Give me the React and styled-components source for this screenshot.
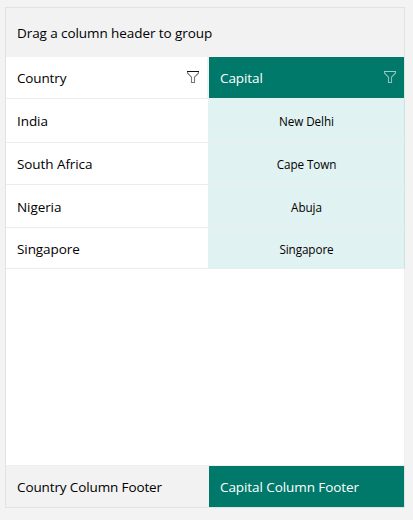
import React from 'react';
import styled, { createGlobalStyle } from 'styled-components';

const GlobalStyle = createGlobalStyle`
  * { box-sizing: border-box; }
  body {
    margin: 0;
    background: #f3f3f3;
    font-family: "Open Sans", "Noto Sans", sans-serif;
    font-size: 13.5px;
    color: #000;
  }
`;

const Page = styled.main`
  height: 520px;
  padding: 7px 8px 12px 5px;
  overflow: hidden;
`;

const Grid = styled.section`
  display: flex;
  flex-direction: column;
  width: 400px;
  height: 501px;
  border: 1px solid #e2e2e2;
  background: #f2f2f2;
`;

const GroupPanel = styled.div`
  display: flex;
  align-items: center;
  height: 49px;
  padding: 0 11px;
`;

const HeaderRow = styled.div`
  display: grid;
  grid-template-columns: 201px 195px;
  column-gap: 2px;
  height: 42px;
  border-bottom: 1px solid #ededed;
`;

const HeaderCell = styled.div`
  display: flex;
  align-items: center;
  justify-content: space-between;
  padding: 1px 7px 0 11px;
  background: ${(p) => (p.$accent ? '#00796b' : '#fff')};
  color: ${(p) => (p.$accent ? '#fff' : '#000')};
`;

const Body = styled.div`
  flex: 1;
  margin: 0 -1px 0 0;
  background: linear-gradient(to right, #fff 398px, #f0f0f0 398px);
`;

const Row = styled.div`
  display: grid;
  grid-template-columns: 202px 197px;
  height: ${(p) => p.$height}px;
`;

const Cell = styled.div`
  display: flex;
  align-items: center;
  padding: ${(p) => p.$top}px 11px 0;
  background: #fff;
  border-bottom: 1px solid #ededed;
`;

const CapitalCell = styled(Cell)`
  justify-content: center;
  padding: 1px 0 0 1px;
  background: #e0f2f1;
  border-right: 1px solid #cfe2e0;
  border-bottom-color: ${(p) => (p.$last ? '#e0f2f1' : '#ededed')};
  font-size: 11.7px;
`;

const Footer = styled.div`
  display: grid;
  grid-template-columns: 201px 195px;
  column-gap: 2px;
  height: 42px;
  border-top: 1px solid #efefef;
`;

const FooterCell = styled(HeaderCell)`
  padding-top: 0;
  background: ${(p) => (p.$accent ? '#00796b' : '#f2f2f2')};
`;

const Label = styled.span`
  white-space: pre;
  line-height: 20px;
  letter-spacing: ${(p) => p.$spacing ?? -0.08}px;
`;

const Icon = styled.svg`
  display: block;
  width: 14px;
  height: 14px;
  margin-top: -2px;
  fill: none;
  stroke: ${(p) => (p.$accent ? '#8cc4bc' : '#777')};
`;

const Rim = styled.path`
  stroke: ${(p) => (p.$accent ? '#9bcdc6' : '#111')};
`;

const FilterIcon = ({ accent }) => (
  <Icon viewBox="0 0 14 14" $accent={accent}>
    <path d="M1.6 2v1.2l3.9 4v5.3h3V7.2l3.9-4V2" strokeWidth="1.1" />
    <Rim $accent={accent} d="M1 1.5h12" />
  </Icon>
);

const rows = [
  { country: 'India', capital: 'New Delhi', height: 44, top: 0 },
  { country: 'South Africa', capital: 'Cape Town', height: 42, top: 0 },
  { country: 'Nigeria', capital: 'Abuja', height: 43, top: 2 },
  { country: 'Singapore', capital: 'Singapore', height: 41, top: 2 },
];

export default function App() {
  return (
    <Page>
      <GlobalStyle />
      <Grid>
        <GroupPanel><Label>Drag a column header to group</Label></GroupPanel>
        <HeaderRow>
          <HeaderCell><Label $spacing={-0.14}>Country</Label><FilterIcon /></HeaderCell>
          <HeaderCell $accent><Label $spacing={-0.1}>Capital</Label><FilterIcon accent /></HeaderCell>
        </HeaderRow>
        <Body>
          {rows.map((r, i) => (
            <Row key={r.country} $height={r.height}>
              <Cell $top={r.top}><Label>{r.country}</Label></Cell>
              <CapitalCell $last={i === rows.length - 1}><Label>{r.capital}</Label></CapitalCell>
            </Row>
          ))}
        </Body>
        <Footer>
          <FooterCell><Label $spacing={-0.12}>Country Column Footer</Label></FooterCell>
          <FooterCell $accent><Label>Capital Column Footer</Label></FooterCell>
        </Footer>
      </Grid>
    </Page>
  );
}
